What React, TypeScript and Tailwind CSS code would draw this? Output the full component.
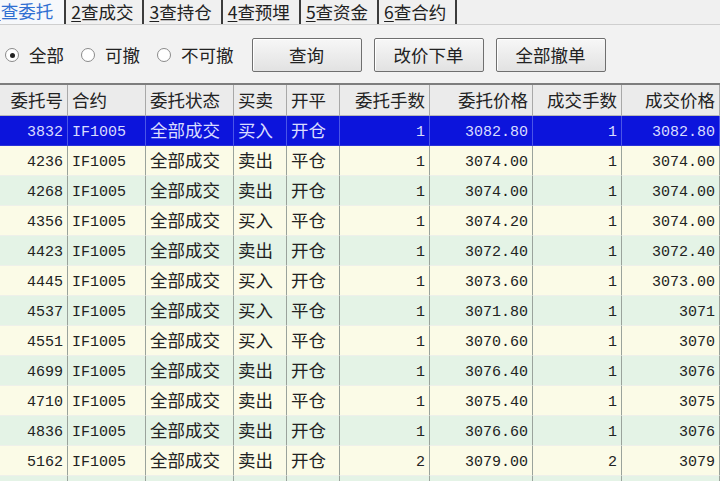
import React from "react";

type Order = {
  id: string;
  contract: string;
  status: string;
  side: string;
  offset: string;
  qty: string;
  price: string;
  filledQty: string;
  filledPrice: string;
};

const ORDERS: Order[] = [
  { id: "3832", contract: "IF1005", status: "全部成交", side: "买入", offset: "开仓", qty: "1", price: "3082.80", filledQty: "1", filledPrice: "3082.80" },
  { id: "4236", contract: "IF1005", status: "全部成交", side: "卖出", offset: "平仓", qty: "1", price: "3074.00", filledQty: "1", filledPrice: "3074.00" },
  { id: "4268", contract: "IF1005", status: "全部成交", side: "卖出", offset: "开仓", qty: "1", price: "3074.00", filledQty: "1", filledPrice: "3074.00" },
  { id: "4356", contract: "IF1005", status: "全部成交", side: "买入", offset: "平仓", qty: "1", price: "3074.20", filledQty: "1", filledPrice: "3074.00" },
  { id: "4423", contract: "IF1005", status: "全部成交", side: "卖出", offset: "开仓", qty: "1", price: "3072.40", filledQty: "1", filledPrice: "3072.40" },
  { id: "4445", contract: "IF1005", status: "全部成交", side: "买入", offset: "开仓", qty: "1", price: "3073.60", filledQty: "1", filledPrice: "3073.00" },
  { id: "4537", contract: "IF1005", status: "全部成交", side: "买入", offset: "平仓", qty: "1", price: "3071.80", filledQty: "1", filledPrice: "3071" },
  { id: "4551", contract: "IF1005", status: "全部成交", side: "买入", offset: "平仓", qty: "1", price: "3070.60", filledQty: "1", filledPrice: "3070" },
  { id: "4699", contract: "IF1005", status: "全部成交", side: "卖出", offset: "开仓", qty: "1", price: "3076.40", filledQty: "1", filledPrice: "3076" },
  { id: "4710", contract: "IF1005", status: "全部成交", side: "卖出", offset: "平仓", qty: "1", price: "3075.40", filledQty: "1", filledPrice: "3075" },
  { id: "4836", contract: "IF1005", status: "全部成交", side: "卖出", offset: "开仓", qty: "1", price: "3076.60", filledQty: "1", filledPrice: "3076" },
  { id: "5162", contract: "IF1005", status: "全部成交", side: "卖出", offset: "开仓", qty: "2", price: "3079.00", filledQty: "2", filledPrice: "3079" },
  { id: "5170", contract: "IF1005", status: "全部成交", side: "买入", offset: "平仓", qty: "1", price: "3079.40", filledQty: "1", filledPrice: "3079" },
];

const TABS = [
  { key: "1", label: "查委托" },
  { key: "2", label: "查成交" },
  { key: "3", label: "查持仓" },
  { key: "4", label: "查预埋" },
  { key: "5", label: "查资金" },
  { key: "6", label: "查合约" },
];

const HEADERS: [string, boolean][] = [
  ["委托号", true],
  ["合约", false],
  ["委托状态", false],
  ["买卖", false],
  ["开平", false],
  ["委托手数", true],
  ["委托价格", true],
  ["成交手数", true],
  ["成交价格", true],
];

const GRID = "grid grid-cols-[68px_78px_88px_53px_53px_90px_103px_89px_98px]";
const CJK = "font-['Noto_Sans_CJK_SC',sans-serif]";
// mono digits sit a touch high next to the CJK glyphs, so nudge them down
const NUM = "mt-[5px] font-['Liberation_Mono','Noto_Sans_CJK_SC',monospace] text-[15px]";

function Radio({ label, checked }: { label: string; checked?: boolean }) {
  return (
    <label className="flex items-center gap-[10px]">
      <span className="flex h-[14px] w-[14px] items-center justify-center rounded-full border border-[#8a8a8a] bg-white">
        {checked ? <span className="h-[5px] w-[5px] rounded-full bg-[#222]" /> : null}
      </span>
      <span>{label}</span>
    </label>
  );
}

function Button({ children }: { children: React.ReactNode }) {
  return (
    <button className="h-[34px] w-[110px] rounded-[2px] border border-[#6f6f6f] bg-gradient-to-b from-[#f7f7f7] to-[#e2e2e2] text-[17.5px] text-[#222] shadow-[inset_1px_1px_0_#fff]">
      {children}
    </button>
  );
}

function Cell({
  children,
  right,
  num,
  selected,
}: {
  children: React.ReactNode;
  right?: boolean;
  num?: boolean;
  selected?: boolean;
}) {
  return (
    <div
      className={`flex h-[30px] items-center overflow-hidden whitespace-nowrap border-r border-b px-[4px] ${
        right ? "justify-end" : "justify-start"
      } ${selected ? "border-r-[#4a55e8] border-b-[#2a32d8]" : "border-r-[#9aa39c] border-b-[#eef0ea]"}`}
    >
      {num ? <span className={NUM}>{children}</span> : children}
    </div>
  );
}

export default function App() {
  return (
    <div className={`h-[481px] w-[720px] overflow-hidden bg-[#f2f2f2] text-[17.5px] text-[#222] ${CJK}`}>
      {/* tab strip */}
      <div className="flex h-[25px] items-end border-b border-[#cfcfcf] bg-[#f0f0f0]">
        {TABS.map((t, i) => (
          <div
            key={t.key}
            className={
              i === 0
                ? "-ml-[9px] flex h-[25px] items-center bg-[#f6f8fb] pr-[11px] text-[#2f6fd2]"
                : "flex h-[24px] items-center border-l-2 border-[#3c3c3c] pl-[5px] pr-[9px]"
            }
          >
            <span className="underline underline-offset-2">{t.key}</span>
            <span>{t.label}</span>
          </div>
        ))}
        <div className="h-[24px] border-l-2 border-[#3c3c3c]" />
      </div>

      {/* filter row */}
      <div className="flex h-[58px] items-center pl-[5px] pt-[2px]">
        <div className="flex items-center gap-[17px]">
          <Radio label="全部" checked />
          <Radio label="可撤" />
          <Radio label="不可撤" />
        </div>
        <div className="ml-[18px] flex items-center gap-[12px]">
          <Button>查询</Button>
          <Button>改价下单</Button>
          <Button>全部撤单</Button>
        </div>
      </div>

      {/* order table */}
      <div className="border-t-2 border-[#7d7d7d]">
        <div className={`${GRID} bg-[#ebebeb]`}>
          {HEADERS.map(([label, right]) => (
            <div
              key={label}
              className={`flex h-[31px] items-center border-r border-b border-r-[#a8a8a8] border-b-[#b8b8b8] px-[4px] ${
                right ? "justify-end" : "justify-start"
              }`}
            >
              {label}
            </div>
          ))}
        </div>

        {ORDERS.map((o, i) => {
          const selected = i === 0;
          const bg = selected
            ? "bg-[#0c14dc] text-[#d9dcff]"
            : i % 2 === 1
              ? "bg-[#fbfbe7]"
              : "bg-[#e4f3e6]";
          return (
            <div key={o.id} className={`${GRID} ${bg}`}>
              <Cell right num selected={selected}>{o.id}</Cell>
              <Cell num selected={selected}>{o.contract}</Cell>
              <Cell selected={selected}>{o.status}</Cell>
              <Cell selected={selected}>{o.side}</Cell>
              <Cell selected={selected}>{o.offset}</Cell>
              <Cell right num selected={selected}>{o.qty}</Cell>
              <Cell right num selected={selected}>{o.price}</Cell>
              <Cell right num selected={selected}>{o.filledQty}</Cell>
              <Cell right num selected={selected}>{o.filledPrice}</Cell>
            </div>
          );
        })}
      </div>
    </div>
  );
}
